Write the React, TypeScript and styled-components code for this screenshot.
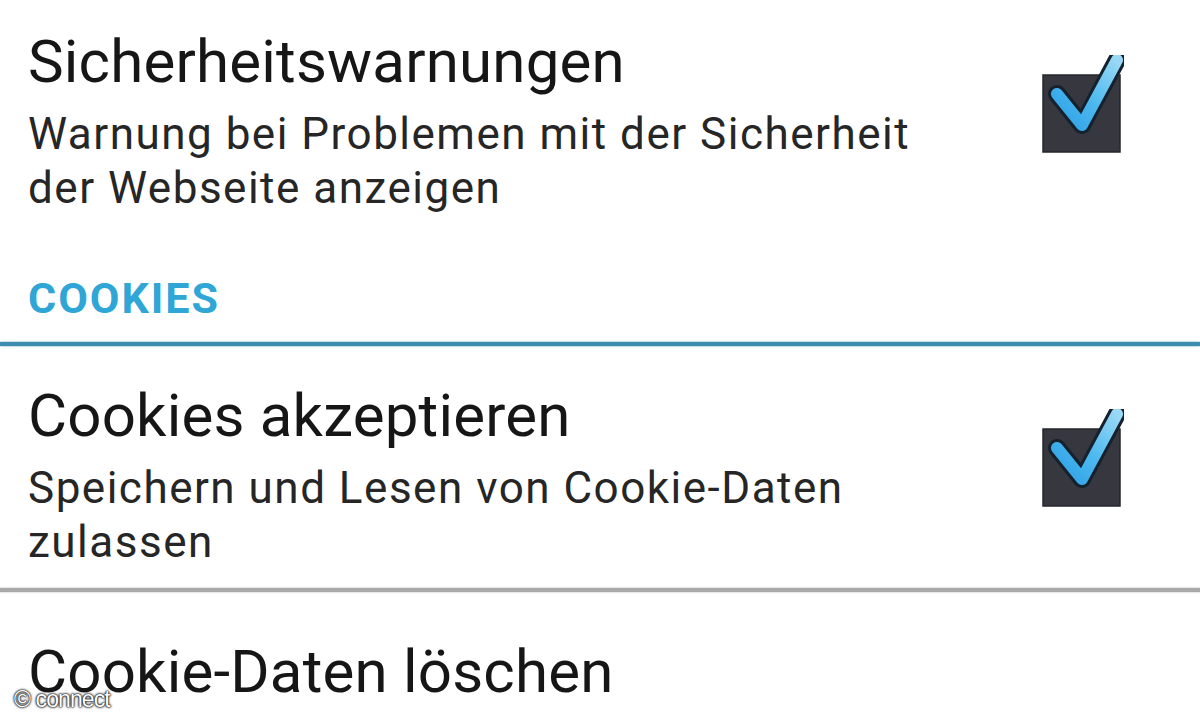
import React from 'react';
import styled, { createGlobalStyle } from 'styled-components';

const GlobalStyle = createGlobalStyle`
  html, body {
    margin: 0;
    padding: 0;
    background: #ffffff;
  }
  body {
    font-family: Roboto, "Noto Sans", sans-serif;
    -webkit-font-smoothing: antialiased;
  }
`;

const Screen = styled.div`
  position: relative;
  width: 1200px;
  height: 720px;
  overflow: hidden;
  background: #ffffff;
  padding-top: 29px;
  box-sizing: border-box;
`;

const PrefRow = styled.div<{ $gap?: number }>`
  display: flex;
  align-items: flex-start;
  padding: 0 76px 0 28px;
  margin-top: ${p => p.$gap ?? 0}px;
`;

const PrefText = styled.div`
  flex: 1;
`;

const PrefTitle = styled.div`
  font-size: 60px;
  line-height: 66px;
  color: #161616;
  letter-spacing: 0.2px;
  white-space: nowrap;
`;

const PrefSummary = styled.div`
  margin-top: 12px;
  font-size: 44px;
  line-height: 54px;
  color: #262626;
  letter-spacing: 1.5px;
  white-space: nowrap;
`;

const CheckWrap = styled.div`
  margin-top: 26px;
  width: 84px;
  height: 100px;
  flex-shrink: 0;
`;

const Category = styled.div`
  margin-top: 56px;
  padding-left: 28px;
  font-size: 43px;
  line-height: 54px;
  font-weight: 700;
  color: #2fa6d6;
  letter-spacing: 2px;
`;

const Divider = styled.div<{ $color: string; $gap: number }>`
  margin-top: ${p => p.$gap}px;
  height: 4px;
  background: ${p => p.$color};
  box-shadow: 0 0 2px ${p => p.$color};
`;

const Watermark = styled.div`
  position: absolute;
  left: 14px;
  bottom: 7px;
  font-family: "Liberation Sans", Arial, sans-serif;
  font-size: 23px;
  letter-spacing: -0.9px;
  color: #ffffff;
  text-shadow: 0 0 3px #000, 0 0 2px #000, 0 0 1px #000;
`;

const CheckBox: React.FC = () => (
  <CheckWrap>
    <svg width="84" height="100" viewBox="0 0 84 100">
      <defs>
        <linearGradient id="tick" x1="0" y1="1" x2="1" y2="0">
          <stop offset="0" stopColor="#2c9fe6" />
          <stop offset="0.5" stopColor="#4fbaf0" />
          <stop offset="1" stopColor="#9ad9f5" />
        </linearGradient>
      </defs>
      <rect x="3" y="20" width="77" height="77" fill="#36373f" stroke="#26272c" strokeWidth="1.5" />
      <path d="M17 39 L42 70 L77 5" fill="none" stroke="#15212c" strokeWidth="18"
        strokeLinecap="round" strokeLinejoin="round" />
      <path d="M17 39 L42 70 L77 5" fill="none" stroke="url(#tick)" strokeWidth="12"
        strokeLinecap="round" strokeLinejoin="round" />
    </svg>
  </CheckWrap>
);

interface PrefProps {
  title: string;
  summary?: string[];
  checked?: boolean;
  gap?: number;
}

const Preference: React.FC<PrefProps> = ({ title, summary, checked, gap }) => (
  <PrefRow $gap={gap}>
    <PrefText>
      <PrefTitle>{title}</PrefTitle>
      {summary && (
        <PrefSummary>
          {summary.map((line, i) => (
            <div key={i}>{line}</div>
          ))}
        </PrefSummary>
      )}
    </PrefText>
    {checked && <CheckBox />}
  </PrefRow>
);

export default function App() {
  return (
    <>
      <GlobalStyle />
      <Screen>
        <Preference
          title="Sicherheitswarnungen"
          summary={['Warnung bei Problemen mit der Sicherheit', 'der Webseite anzeigen']}
          checked
        />
        <Category>COOKIES</Category>
        <Divider $color="#3b8cae" $gap={17} />
        <Preference
          gap={37}
          title="Cookies akzeptieren"
          summary={['Speichern und Lesen von Cookie-Daten', 'zulassen']}
          checked
        />
        <Divider $color="#a9a9a9" $gap={19} />
        <Preference gap={47} title="Cookie-Daten löschen" />
        <Watermark>© connect</Watermark>
      </Screen>
    </>
  );
}
